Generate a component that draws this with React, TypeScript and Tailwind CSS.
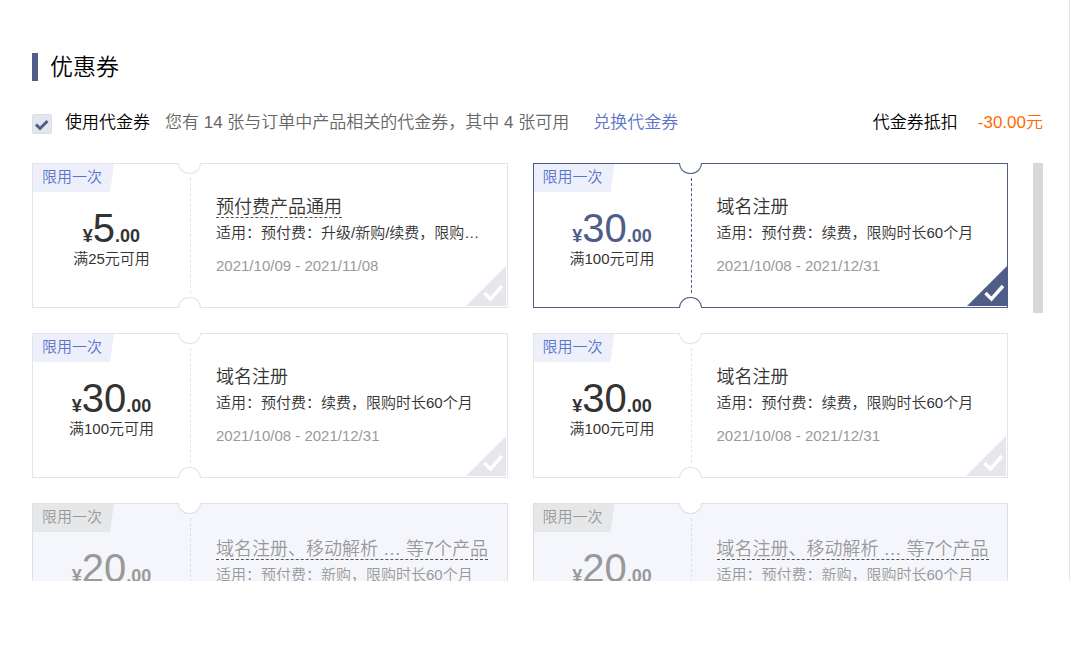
import { useState } from 'react';
import clsx from 'clsx';

type Coupon = {
  id: number;
  amount: string;
  condition?: string;
  title: string;
  scope: string;
  period?: string;
  hasDetail?: boolean;
  disabled?: boolean;
};

const coupons: Coupon[] = [
  {
    id: 1,
    amount: '5',
    condition: '满25元可用',
    title: '预付费产品通用',
    scope: '适用：预付费：升级/新购/续费，限购…',
    period: '2021/10/09 - 2021/11/08',
    hasDetail: true,
  },
  {
    id: 2,
    amount: '30',
    condition: '满100元可用',
    title: '域名注册',
    scope: '适用：预付费：续费，限购时长60个月',
    period: '2021/10/08 - 2021/12/31',
  },
  {
    id: 3,
    amount: '30',
    condition: '满100元可用',
    title: '域名注册',
    scope: '适用：预付费：续费，限购时长60个月',
    period: '2021/10/08 - 2021/12/31',
  },
  {
    id: 4,
    amount: '30',
    condition: '满100元可用',
    title: '域名注册',
    scope: '适用：预付费：续费，限购时长60个月',
    period: '2021/10/08 - 2021/12/31',
  },
  {
    id: 5,
    amount: '20',
    title: '域名注册、移动解析 … 等7个产品',
    scope: '适用：预付费：新购，限购时长60个月',
    hasDetail: true,
    disabled: true,
  },
  {
    id: 6,
    amount: '20',
    title: '域名注册、移动解析 … 等7个产品',
    scope: '适用：预付费：新购，限购时长60个月',
    hasDetail: true,
    disabled: true,
  },
];

type CardProps = {
  coupon: Coupon;
  selected: boolean;
  onToggle: () => void;
};

function CouponCard({ coupon, selected, onToggle }: CardProps) {
  const { amount, condition, title, scope, period, hasDetail, disabled } = coupon;
  const line = selected ? 'border-[#505d87]' : disabled ? 'border-[#dcdfe6]' : 'border-[#e3e5ec]';

  return (
    <label
      className={clsx(
        'relative flex h-[145px] min-w-0 border',
        line,
        disabled ? 'bg-[#f5f6fb] text-[#999999]' : 'cursor-pointer bg-white text-[#333333]',
      )}
    >
      {/* Tag */}
      <span
        className={clsx(
          'absolute top-0 left-0 h-7 w-[81px] pl-[9px] text-[15px] leading-[25px] [clip-path:polygon(0_0,100%_0,77px_100%,0_100%)]',
          disabled ? 'bg-[#e6e7e9] text-[#999999]' : 'bg-[#edf0fa] text-[#5a73cc]',
        )}
      >
        限用一次
      </span>

      {/* Notches */}
      <span className={clsx('absolute -top-px left-[145px] h-[11px] w-[23px] rounded-b-full border border-t-0 bg-white', line)} />
      <span className={clsx('absolute -bottom-px left-[145px] h-[11px] w-[23px] rounded-t-full border border-b-0 bg-white', line)} />

      {/* Amount */}
      <span className="w-[157px] shrink-0 pt-11 text-center">
        <span className={clsx('block text-[18px] leading-none font-bold', selected && 'text-[#505d87]')}>
          ¥<span className="text-[40px] leading-none font-normal">{amount}</span>.00
        </span>
        {condition && <span className="block text-[15px] leading-[22px]">{condition}</span>}
      </span>

      <span className={clsx('my-[14px] shrink-0 border-l border-dashed', line)} />

      {/* Details */}
      <span className={clsx('min-w-0 flex-1 pr-6 pl-[25px]', disabled ? 'pt-[33px]' : 'pt-[31px]')}>
        <span
          className={clsx(
            'box-content block h-[22px] w-fit border-b text-[18px] leading-6 whitespace-nowrap',
            hasDetail ? 'border-dashed border-[#555555]' : 'border-transparent',
          )}
        >
          {title}
        </span>
        <span className="mt-[3px] block truncate text-[15px] leading-6">{scope}</span>
        {period && <span className="mt-[10px] block text-[15px] leading-[22px] text-[#999999]">{period}</span>}
      </span>

      {/* Corner tick */}
      <input type="checkbox" className="sr-only" checked={selected} disabled={disabled} onChange={onToggle} />
      <svg
        viewBox="0 0 40 40"
        aria-hidden="true"
        className={clsx('absolute bottom-px h-10 w-10', selected ? 'right-0 text-[#505d87]' : 'right-px text-[#e6e7ed]')}
      >
        <path d="M40 0v40H0z" fill="currentColor" />
        <path d="M18.5 27l6 6 11.5-13" fill="none" stroke="#fff" strokeWidth="3.4" />
      </svg>
    </label>
  );
}

export default function App() {
  const [useVoucher, setUseVoucher] = useState(true);
  const [selectedId, setSelectedId] = useState<number | null>(2);

  return (
    <main className="mr-[9px] border-r border-[#e5e5e5] bg-white pt-[53px] pr-[26px] pl-8 font-['Liberation_Sans','Noto_Sans_CJK_SC',sans-serif] font-[350]">
      <h1 className="flex h-7 items-center border-l-[6px] border-[#505d87] pl-3 text-[23px] leading-7 text-black">
        优惠券
      </h1>

      <div className="mt-[30px] flex items-center text-[17px] leading-6 whitespace-nowrap">
        <label className="flex items-center gap-[13px] text-black">
          <span className="relative mt-[2px] flex h-5 w-5">
            <input
              type="checkbox"
              checked={useVoucher}
              onChange={() => setUseVoucher(!useVoucher)}
              className="h-5 w-5 appearance-none rounded-xs border border-[#dcdfe8] bg-[#e5e7ee]"
            />
            {useVoucher && (
              <svg viewBox="0 0 20 20" aria-hidden="true" className="pointer-events-none absolute inset-0 h-5 w-5">
                <path d="M4 10.5l4 4L15.5 7" fill="none" stroke="#505d87" strokeWidth="3" />
              </svg>
            )}
          </span>
          使用代金券
        </label>
        <p className="ml-[15px] text-[#666666]">您有 14 张与订单中产品相关的代金券，其中 4 张可用</p>
        <a href="#redeem" className="ml-6 text-[#5a73cc]">兑换代金券</a>
        <p className="ml-auto flex gap-5 text-black">
          代金券抵扣
          <span className="text-[#ff6a00]">-30.00元</span>
        </p>
      </div>

      <div className="mt-7 flex max-h-[418px] gap-[25px] overflow-hidden">
        <div className="grid flex-1 grid-cols-2 gap-[25px]">
          {coupons.map((coupon) => (
            <CouponCard
              key={coupon.id}
              coupon={coupon}
              selected={coupon.id === selectedId}
              onToggle={() => setSelectedId(coupon.id === selectedId ? null : coupon.id)}
            />
          ))}
        </div>
        {/* Scroll thumb */}
        <div className="h-[150px] w-[10px] bg-[#d8d8d8]" />
      </div>
    </main>
  );
}
